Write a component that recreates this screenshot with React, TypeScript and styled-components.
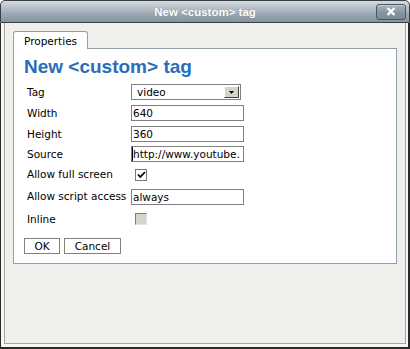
import React from "react";
import styled, { createGlobalStyle } from "styled-components";

const Global = createGlobalStyle`
  html, body { margin: 0; padding: 0; background: #ffffff; }
  body { width: 410px; height: 349px; overflow: hidden; }
  * { box-sizing: border-box; }
`;

const Window = styled.div`
  width: 410px;
  height: 349px;
  display: flex;
  flex-direction: column;
  font-family: "DejaVu Sans", Verdana, sans-serif;
  font-size: 10.5px;
  color: #000;
`;

const TitleBar = styled.div`
  height: 23px;
  flex: none;
  display: grid;
  grid-template-columns: 1fr auto 1fr;
  align-items: center;
  background: linear-gradient(#d3dae0 0%, #b4bfc8 35%, #95a3af 70%, #84939f 100%);
  border: 1px solid #3a3f44;
  border-radius: 5px 5px 0 0;
`;

const TitleText = styled.span`
  grid-column: 2;
  font-family: "Liberation Sans", Arial, sans-serif;
  font-weight: bold;
  font-size: 11.5px;
  color: #ffffff;
  text-shadow: 0 0 1px rgba(60, 70, 80, 0.5);
`;

const CloseButton = styled.div`
  grid-column: 3;
  justify-self: end;
  margin-right: 3px;
  width: 30px;
  height: 16px;
  display: flex;
  align-items: center;
  justify-content: center;
  border: 1px solid #4b5660;
  border-radius: 3px;
  background: linear-gradient(#a7b3bd, #8594a1 55%, #7a8996);
  box-shadow: inset 0 1px 0 rgba(255, 255, 255, 0.35);
`;

const Body = styled.div`
  flex: 1;
  display: flex;
  padding: 0 2px 3px 3px;
  border-left: 1px solid #2a2a2a;
  border-right: 2px solid #2a2a2a;
  border-bottom: 2px solid #2a2a2a;
  background: #f7f6f3;
`;

const Frame = styled.div`
  flex: 1;
  display: flex;
  flex-direction: column;
  align-items: flex-start;
  padding: 8px 8px 0 8px;
  border: 1px solid #aba399;
  border-top: none;
  background: #efefec;
`;

const Tab = styled.div`
  position: relative;
  z-index: 1;
  height: 18px;
  margin-bottom: -1px;
  padding: 3px 10px 0 10px;
  background: #ffffff;
  border: 1px solid #919fa6;
  border-bottom: none;
  border-radius: 3px 3px 0 0;
  font-size: 10.5px;
  line-height: 13px;
`;

const Panel = styled.div`
  align-self: stretch;
  display: flex;
  flex-direction: column;
  align-items: flex-start;
  padding: 7px 8px 9px 8px;
  background: #ffffff;
  border: 1px solid #919fa6;
`;

const Heading = styled.h1`
  margin: 0;
  padding-left: 2px;
  font-family: "Liberation Sans", Arial, sans-serif;
  font-weight: bold;
  font-size: 19px;
  line-height: 22px;
  color: #2b6cb8;
`;

const Form = styled.div`
  margin: 4px 0 0 5px;
  display: flex;
  flex-direction: column;
`;

const Row = styled.div<{ $h: number }>`
  height: ${(p) => p.$h}px;
  display: grid;
  grid-template-columns: 104px 120px;
  align-items: center;
`;

const Label = styled.span`
  white-space: nowrap;
  line-height: 13px;
`;

const TextField = styled.input<{ $focused?: boolean }>`
  width: 113px;
  height: 16px;
  margin: 0;
  padding: 0 0 0 1px;
  border: 1px solid #7f7f7f;
  background: #ffffff;
  font-family: "DejaVu Sans", Verdana, sans-serif;
  font-size: 10.5px;
  color: #000;
  outline: none;
  box-shadow: ${(p) => (p.$focused ? "inset 1px 0 0 #000" : "none")};
`;

const SelectBox = styled.div`
  width: 110px;
  height: 16px;
  display: flex;
  align-items: center;
  justify-content: space-between;
  padding: 0 1px 0 5px;
  border: 1px solid #7f7f7f;
  background: #ffffff;
  line-height: 13px;
`;

const SelectArrow = styled.div`
  width: 15px;
  height: 12px;
  display: flex;
  align-items: center;
  justify-content: center;
  background: #d6d3cc;
  border: 1px solid;
  border-color: #ffffff #404040 #404040 #ffffff;
`;

const CheckBox = styled.div<{ $disabled?: boolean }>`
  margin-left: 4px;
  width: 12px;
  height: 12px;
  display: flex;
  align-items: center;
  justify-content: center;
  border: 1px solid;
  border-color: ${(p) =>
    p.$disabled ? "#7d7d7d #e4e2de #e4e2de #7d7d7d" : "#7a7a7a"};
  background: ${(p) => (p.$disabled ? "#d6d3cd" : "#ffffff")};
`;

const Buttons = styled.div`
  margin: 8px 0 0 2px;
  display: flex;
  gap: 4px;
`;

const Button = styled.button<{ $w: number }>`
  width: ${(p) => p.$w}px;
  height: 16px;
  margin: 0;
  padding: 0;
  border: 1px solid #7f7f7f;
  background: #ffffff;
  font-family: "DejaVu Sans", Verdana, sans-serif;
  font-size: 10.5px;
  line-height: 13px;
  color: #000;
`;

const rows = [20, 22, 20, 20, 21, 23, 22];

export default function App() {
  return (
    <>
      <Global />
      <Window>
        <TitleBar>
          <TitleText>New &lt;custom&gt; tag</TitleText>
          <CloseButton>
            <svg width="10" height="9" viewBox="0 0 10 9">
              <path d="M1.5 1 L8.5 8 M8.5 1 L1.5 8" stroke="#ffffff" strokeWidth="2.4" />
            </svg>
          </CloseButton>
        </TitleBar>
        <Body>
          <Frame>
            <Tab>Properties</Tab>
            <Panel>
              <Heading>New &lt;custom&gt; tag</Heading>
              <Form>
                <Row $h={rows[0]}>
                  <Label>Tag</Label>
                  <SelectBox>
                    <span>video</span>
                    <SelectArrow>
                      <svg width="5" height="3" viewBox="0 0 5 3">
                        <path d="M0 0 H5 L2.5 3 Z" fill="#000" />
                      </svg>
                    </SelectArrow>
                  </SelectBox>
                </Row>
                <Row $h={rows[1]}>
                  <Label>Width</Label>
                  <TextField readOnly value="640" />
                </Row>
                <Row $h={rows[2]}>
                  <Label>Height</Label>
                  <TextField readOnly value="360" />
                </Row>
                <Row $h={rows[3]}>
                  <Label>Source</Label>
                  <TextField readOnly $focused value="http://www.youtube." />
                </Row>
                <Row $h={rows[4]}>
                  <Label>Allow full screen</Label>
                  <CheckBox>
                    <svg width="9" height="8" viewBox="0 0 9 8">
                      <path d="M1 3.5 L3.3 6 L8 1" stroke="#000" strokeWidth="1.8" fill="none" />
                    </svg>
                  </CheckBox>
                </Row>
                <Row $h={rows[5]}>
                  <Label>Allow script access</Label>
                  <TextField readOnly value="always" />
                </Row>
                <Row $h={rows[6]}>
                  <Label>Inline</Label>
                  <CheckBox $disabled />
                </Row>
              </Form>
              <Buttons>
                <Button $w={36}>OK</Button>
                <Button $w={57}>Cancel</Button>
              </Buttons>
            </Panel>
          </Frame>
        </Body>
      </Window>
    </>
  );
}
